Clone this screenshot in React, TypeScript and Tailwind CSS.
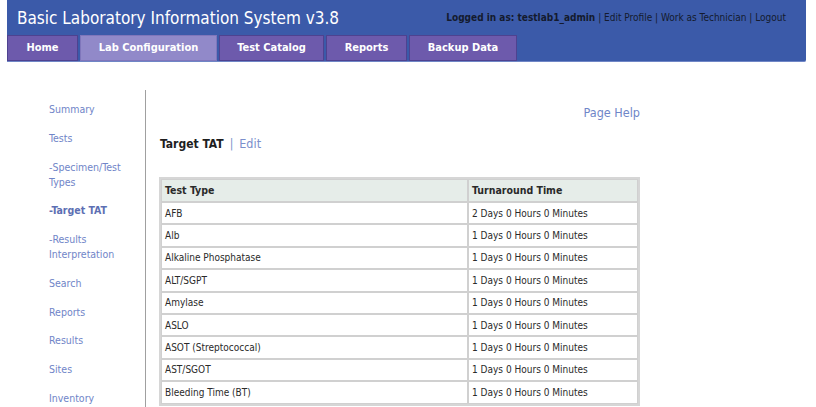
const tabs: { label: string; w: string }[] = [
  { label: "Home", w: "w-[71px]" },
  { label: "Lab Configuration", w: "w-[137px]" },
  { label: "Test Catalog", w: "w-[105px]" },
  { label: "Reports", w: "w-[81px]" },
  { label: "Backup Data", w: "w-[108px]" },
];

const sideLinks: { label: string; bold?: boolean }[] = [
  { label: "Summary" },
  { label: "Tests" },
  { label: "-Specimen/Test Types" },
  { label: "-Target TAT", bold: true },
  { label: "-Results Interpretation" },
  { label: "Search" },
  { label: "Reports" },
  { label: "Results" },
  { label: "Sites" },
  { label: "Inventory" },
];

const rows: [string, string][] = [
  ["AFB", "2 Days 0 Hours 0 Minutes"],
  ["Alb", "1 Days 0 Hours 0 Minutes"],
  ["Alkaline Phosphatase", "1 Days 0 Hours 0 Minutes"],
  ["ALT/SGPT", "1 Days 0 Hours 0 Minutes"],
  ["Amylase", "1 Days 0 Hours 0 Minutes"],
  ["ASLO", "1 Days 0 Hours 0 Minutes"],
  ["ASOT (Streptococcal)", "1 Days 0 Hours 0 Minutes"],
  ["AST/SGOT", "1 Days 0 Hours 0 Minutes"],
  ["Bleeding Time (BT)", "1 Days 0 Hours 0 Minutes"],
];

export default function App() {
  return (
    <div className="h-[407px] overflow-hidden bg-white font-['Tahoma','DejaVu_Sans_Condensed','DejaVu_Sans',sans-serif]">
      {/* Header */}
      <div className="mx-[7px] w-[799px] bg-[#3b5aa9] border-b border-[#6f86c6] rounded-br-[2px]">
        <div className="flex items-center justify-between pl-[10px] pr-[20px] pt-[6px] h-[35px]">
          <h1 className="text-[17px] leading-none text-white font-normal pb-[4px]">
            Basic Laboratory Information System v3.8
          </h1>
          <div className="text-[10px] text-[#141a2e] pb-[6px]">
            <span className="font-bold">Logged in as: testlab1_admin</span>
            <span> | Edit Profile | Work as Technician | Logout</span>
          </div>
        </div>
        <div className="flex gap-[2px] h-[26px]">
          {tabs.map((t) => (
            <div
              key={t.label}
              className={
                t.label === "Lab Configuration"
                  ? `${t.w} flex items-center justify-center bg-[#9189c9] border border-[#7f76bb] text-white text-[11px] font-bold`
                  : `${t.w} flex items-center justify-center bg-[#6d5aac] border border-[#4e4290] text-white text-[11px] font-bold`
              }
            >
              {t.label}
            </div>
          ))}
        </div>
      </div>

      <div className="flex mt-[28px]">
        {/* Sidebar */}
        <div className="w-[146px] pl-[49px] pr-[8px] pt-[12px] border-r border-[#a0a0a0] h-[400px]">
          <ul className="flex flex-col gap-[13.75px]">
            {sideLinks.map((l) => (
              <li
                key={l.label}
                className={
                  l.bold
                    ? "text-[10.5px] leading-[15px] text-[#5d6fb3] font-bold"
                    : "text-[10.5px] leading-[15px] text-[#7085c8]"
                }
              >
                {l.label}
              </li>
            ))}
          </ul>
        </div>

        {/* Main */}
        <div className="pl-[14px] w-[494px]">
          <div className="text-right text-[12.5px] text-[#6f86c8] mt-[17px] leading-none">
            Page Help
          </div>
          <div className="mt-[18px] text-[12px] leading-none flex items-center">
            <span className="font-bold text-[#1e1e1e]">Target TAT</span>
            <span className="text-[#7b8fcc] mx-[6px]">|</span>
            <span className="text-[#7b8fcc] text-[12.5px]">Edit</span>
          </div>
          <table className="mt-[27px] -ml-px w-[481px] border-separate border-spacing-0 border-[2px] border-[#d6d6d6] text-[10px] text-[#2a2a2a]">
            <thead>
              <tr className="bg-[#e6ede9]">
                <th className="w-[307px] h-[23px] text-left font-bold text-[10.5px] px-[3px] border border-[#d0d0d0]">
                  Test Type
                </th>
                <th className="h-[23px] text-left font-bold text-[10.5px] px-[3px] border border-[#d0d0d0]">
                  Turnaround Time
                </th>
              </tr>
            </thead>
            <tbody>
              {rows.map(([a, b]) => (
                <tr key={a}>
                  <td className="h-[22.4px] px-[3px] border border-[#d0d0d0]">{a}</td>
                  <td className="h-[22.4px] px-[3px] border border-[#d0d0d0]">{b}</td>
                </tr>
              ))}
            </tbody>
          </table>
        </div>
      </div>
    </div>
  );
}
